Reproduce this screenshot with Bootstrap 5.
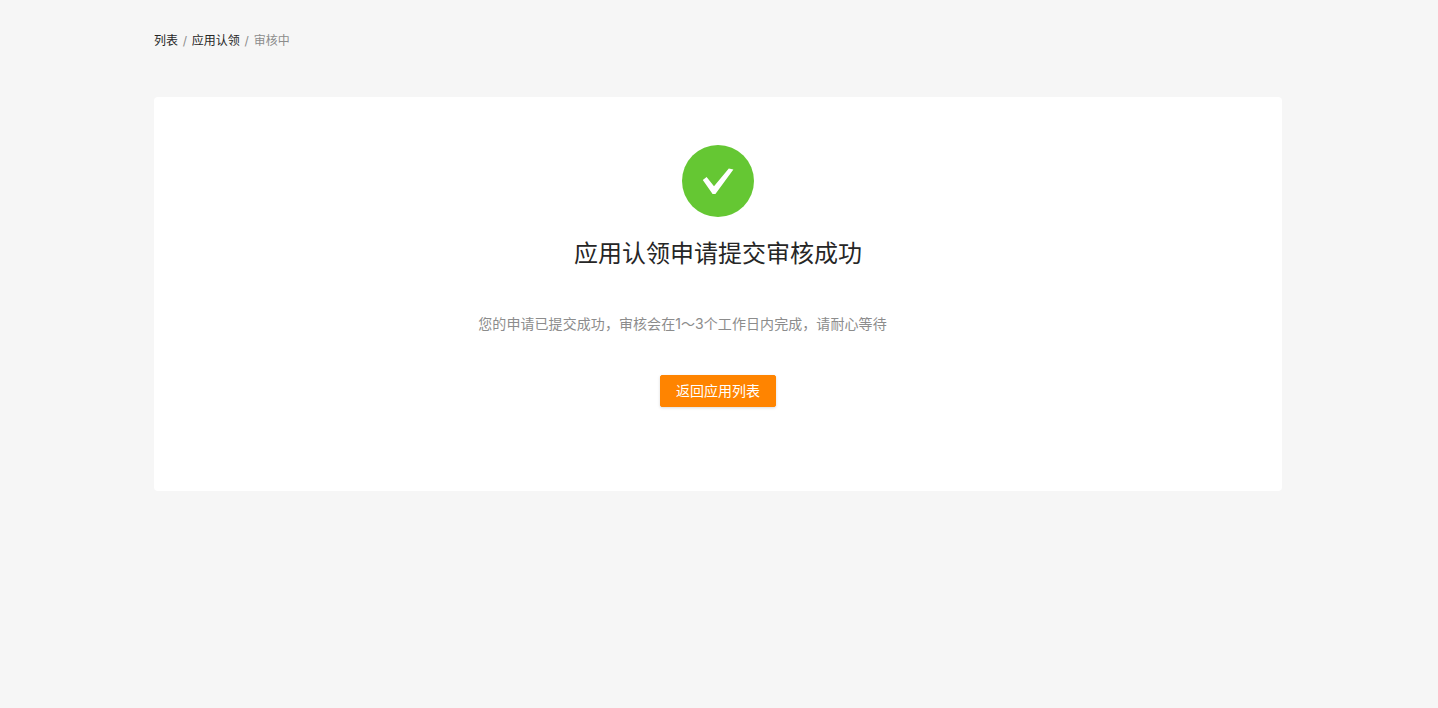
<!DOCTYPE html>
<html lang="zh-CN">
<head>
<meta charset="utf-8">
<title>审核中</title>
<link rel="stylesheet" href="https://cdn.jsdelivr.net/npm/bootstrap@5.3.0/dist/css/bootstrap.min.css">
<style>
html,body{height:100%;}
body{background:#f6f6f6;font-family:"Inter","Noto Sans CJK SC",sans-serif;overflow:hidden;}
.page-wrap{width:1128px;margin-left:154px;}
.crumbs{height:97px;padding-top:32px;align-items:flex-start;}
.crumbs .breadcrumb{margin:0;font-size:12px;line-height:18px;--bs-breadcrumb-divider-color:#8c8c8c;--bs-breadcrumb-item-padding-x:4.75px;--bs-breadcrumb-item-active-color:#8c8c8c;}
.crumbs a{color:#262626;text-decoration:none;}
.result-panel{height:394px;background:#fff;border-radius:4px;padding-top:48px;}
.ok-icon{width:72px;height:72px;display:block;}
.result-title{font-size:24px;line-height:32px;font-weight:400;color:#262626;margin:21px 0 0;}
.result-desc{font-size:14px;line-height:20px;letter-spacing:.07px;color:#8c8c8c;margin:44px 0 0 -71px;}
.back-btn{--bs-btn-bg:#ff8400;--bs-btn-border-color:#ff8400;--bs-btn-hover-bg:#ff8400;--bs-btn-hover-border-color:#ff8400;--bs-btn-color:#fff;--bs-btn-hover-color:#fff;--bs-btn-border-radius:2px;--bs-btn-padding-x:15px;--bs-btn-padding-y:4px;--bs-btn-font-size:14px;--bs-btn-line-height:22px;margin-top:41px;width:116px;height:32px;box-shadow:0 1px 3px rgba(0,0,0,.15);}
</style>
</head>
<body>
<div class="page-wrap">
  <nav class="crumbs d-flex" aria-label="breadcrumb">
    <ol class="breadcrumb">
      <li class="breadcrumb-item"><a href="#">列表</a></li>
      <li class="breadcrumb-item"><a href="#">应用认领</a></li>
      <li class="breadcrumb-item active" aria-current="page">审核中</li>
    </ol>
  </nav>
  <main class="result-panel d-flex flex-column align-items-center">
    <svg class="ok-icon" viewBox="0 0 72 72" aria-hidden="true">
      <circle cx="36" cy="36" r="36" fill="#65c733"/>
      <path d="M20.8 35 L24.6 32 L32 41.2 L46.8 23.4 L51.4 24.4 L33.4 49 L30.6 49 Z" fill="#fff"/>
    </svg>
    <h1 class="result-title">应用认领申请提交审核成功</h1>
    <p class="result-desc">您的申请已提交成功，审核会在1～3个工作日内完成，请耐心等待</p>
    <button type="button" class="btn back-btn">返回应用列表</button>
  </main>
</div>
<script src="https://cdn.jsdelivr.net/npm/bootstrap@5.3.0/dist/js/bootstrap.bundle.min.js"></script>
</body>
</html>
